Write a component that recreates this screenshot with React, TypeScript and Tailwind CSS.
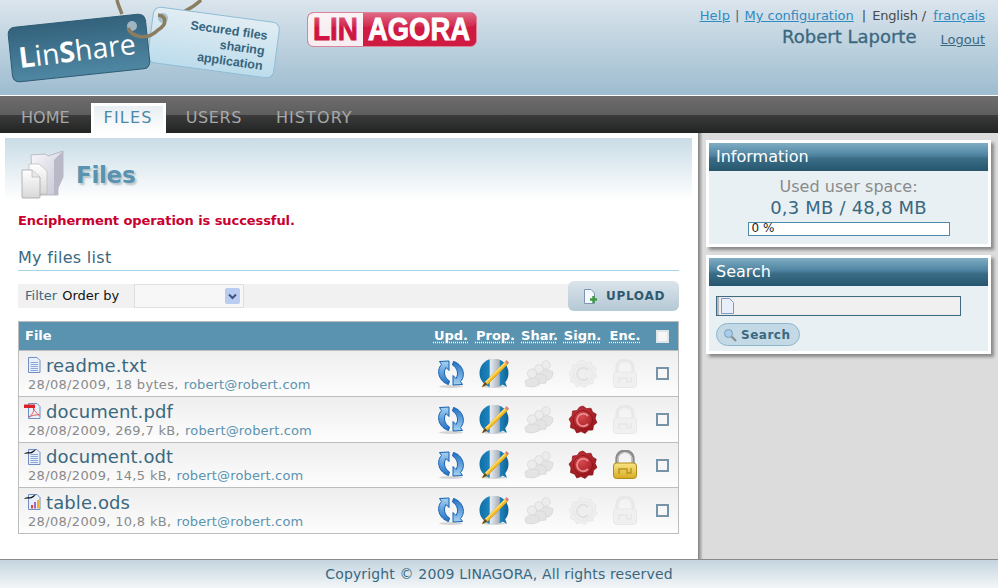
import React from 'react';

const files = [
  { name: 'readme.txt', meta: '28/08/2009, 18 bytes,', mail: 'robert@robert.com', icon: 'txt', signed: false, locked: false, row: 'h-[46px]' },
  { name: 'document.pdf', meta: '28/08/2009, 269,7 kB,', mail: 'robert@robert.com', icon: 'pdf', signed: true, locked: false, row: 'h-[46px]' },
  { name: 'document.odt', meta: '28/08/2009, 14,5 kB,', mail: 'robert@robert.com', icon: 'odt', signed: true, locked: true, row: 'h-[45px]' },
  { name: 'table.ods', meta: '28/08/2009, 10,8 kB,', mail: 'robert@robert.com', icon: 'ods', signed: false, locked: false, row: 'h-[46px]' },
];

const gridCols = 'grid grid-cols-[411px_42px_43px_47px_41px_44px_31px] items-center';

function Defs() {
  return (
    <svg className="absolute h-0 w-0">
      <defs>
        <linearGradient id="tagDark" x1="0" y1="0" x2="0" y2="1">
          <stop offset="0" stopColor="#33627c" />
          <stop offset="1" stopColor="#4f87a3" />
        </linearGradient>
        <linearGradient id="tagLight" x1="0" y1="0" x2="0" y2="1">
          <stop offset="0" stopColor="#e2edf3" />
          <stop offset="1" stopColor="#bcdcec" />
        </linearGradient>
        <linearGradient id="blueArrow" x1="0" y1="0" x2="0" y2="1">
          <stop offset="0" stopColor="#a5d2f2" />
          <stop offset="1" stopColor="#1f6fc4" />
        </linearGradient>
        <linearGradient id="globe" x1="0" y1="0" x2="1" y2="0">
          <stop offset="0" stopColor="#0f6fa8" />
          <stop offset="0.33" stopColor="#1e83bd" />
          <stop offset="0.38" stopColor="#e4eaf0" />
          <stop offset="0.68" stopColor="#a9b0b8" />
          <stop offset="0.72" stopColor="#1e83bd" />
          <stop offset="1" stopColor="#0d5f92" />
        </linearGradient>
        <radialGradient id="seal" cx="0.45" cy="0.4" r="0.65">
          <stop offset="0" stopColor="#d8474c" />
          <stop offset="1" stopColor="#8e0f16" />
        </radialGradient>
        <linearGradient id="gold" x1="0" y1="0" x2="0" y2="1">
          <stop offset="0" stopColor="#f8e585" />
          <stop offset="1" stopColor="#d8ab22" />
        </linearGradient>
        <linearGradient id="folder" x1="0" y1="0" x2="1" y2="1">
          <stop offset="0" stopColor="#f8f8fc" />
          <stop offset="1" stopColor="#c4c4d2" />
        </linearGradient>
        <linearGradient id="sheet" x1="0" y1="0" x2="0" y2="1">
          <stop offset="0" stopColor="#ffffff" />
          <stop offset="1" stopColor="#d8d8d8" />
        </linearGradient>
        <linearGradient id="gloss" x1="0" y1="0" x2="0" y2="1">
          <stop offset="0" stopColor="#ffffff" stopOpacity="0.35" />
          <stop offset="1" stopColor="#ffffff" stopOpacity="0.05" />
        </linearGradient>
      </defs>
    </svg>
  );
}

function LinShareLogo() {
  return (
    <svg width="282" height="95" viewBox="0 0 282 95" className="shrink-0">
      <path d="M117 0 C118 5 120 9 122 14 M201 0 C197 4 191 8 185 11" fill="none" stroke="#8b7d60" strokeWidth="3.4" />
      <g transform="rotate(7.6 213 42.5)">
        <rect x="150" y="14.5" width="127" height="56" rx="7" fill="url(#tagLight)" stroke="#8fbdd6" />
      </g>
      <circle cx="163" cy="18" r="5" fill="#a9bfcc" />
      <g transform="rotate(-6 79 48)">
        <rect x="10" y="20.5" width="138" height="55" rx="7" fill="url(#tagDark)" stroke="#2f5c74" />
      </g>
      <circle cx="132" cy="26" r="5" fill="#9fb5c2" />
      <path d="M128 28 C131 36 146 42 158 30 C168 24 166 16 158 15" fill="none" stroke="#8b7d60" strokeWidth="3.6" />
      <text transform="translate(20 68) rotate(-7)" fill="#fff" fontFamily="'Open Sans', sans-serif" fontSize="28.5">
        <tspan fontWeight="700">L</tspan>in<tspan fontWeight="700">S</tspan>hare
      </text>
      <g fill="#37657e" fontFamily="'Liberation Sans', sans-serif" fontSize="12.5" fontWeight="700" textAnchor="end">
        <text transform="translate(267 40) rotate(8)">Secured files</text>
        <text transform="translate(264 55) rotate(8)">sharing</text>
        <text transform="translate(262 70) rotate(8)">application</text>
      </g>
    </svg>
  );
}

function LinagoraLogo() {
  return (
    <svg width="171" height="36" viewBox="0 0 171 36" className="shrink-0">
      <rect x="0.5" y="0.5" width="169" height="34" rx="6" fill="#cf1a42" stroke="#d9849a" />
      <path d="M1 6.5 a5.5 5.5 0 0 1 5.5 -5.5 H56 V34 H6.5 a5.5 5.5 0 0 1 -5.5 -5.5 Z" fill="#f8eef1" />
      <text transform="translate(6 28) scale(0.873 1)" fill="#cf1441" stroke="#cf1441" strokeWidth="0.9" fontFamily="'Liberation Sans', sans-serif" fontSize="32" fontWeight="700">LIN</text>
      <text transform="translate(61 28) scale(0.857 1)" fill="#fff" stroke="#fff" strokeWidth="0.9" fontFamily="'Liberation Sans', sans-serif" fontSize="32" fontWeight="700">AGORA</text>
      <rect x="1" y="1" width="168" height="14" rx="6" fill="url(#gloss)" />
    </svg>
  );
}

function FilesIcon() {
  return (
    <svg width="46" height="50" viewBox="0 0 46 50" className="shrink-0">
      <path d="M10 5 L25 4 L27 6 L42 1 L42 27 L37 38 L37 45 L12 45 Z" fill="url(#folder)" stroke="#a8a8b6" strokeWidth="0.7" />
      <path d="M42 1 L42 27 L37 38 L37 45 L33 45 L33 10 Z" fill="#b8b8c6" />
      <path d="M8 14 H18 L26 21 V44 H8 Z" fill="url(#sheet)" stroke="#b9b9b9" strokeWidth="0.7" />
      <path d="M1 20 H11 L19 27 V47 Q19 48 18 48 H2 Q1 48 1 47 Z" fill="url(#sheet)" stroke="#a5a5a5" strokeWidth="0.8" />
      <path d="M11 20 V27 H19" fill="#e8e8e8" stroke="#b5b5b5" strokeWidth="0.7" />
    </svg>
  );
}

function RefreshIcon() {
  const arrow = 'M12 25.5 C3 23 -1 12 5 5.5 L3 2.5 L12.5 2 L12.5 11.5 L9.5 8.5 C6.5 13 8 19 13 22 Z';
  return (
    <svg width="30" height="30" viewBox="0 0 30 30">
      <ellipse cx="15" cy="27.5" rx="12" ry="1.5" fill="#000" opacity="0.15" />
      <g transform="translate(0.5 0)">
        <path d={arrow} fill="url(#blueArrow)" stroke="#1660b0" strokeWidth="1" />
        <path d={arrow} fill="url(#blueArrow)" stroke="#1660b0" strokeWidth="1" transform="rotate(180 14.5 14)" />
      </g>
    </svg>
  );
}

function PropIcon() {
  return (
    <svg width="32" height="30" viewBox="0 0 32 30">
      <ellipse cx="16" cy="27.5" rx="12" ry="1.5" fill="#000" opacity="0.15" />
      <path d="M22 24 L29 28 L26 20 Z" fill="#1875ab" />
      <circle cx="16" cy="14" r="14.5" fill="url(#globe)" />
      <path d="M4 28 L7 23 L27 3 L29.5 5.5 L9.5 25.5 Z" fill="#f5b81f" stroke="#c98b12" strokeWidth="0.5" />
      <path d="M7 23 L27 3 L28 4 L8 24 Z" fill="#fde27a" />
      <path d="M27 3 L28.5 1 L31 3.5 L29.5 5.5 Z" fill="#d9817a" />
      <path d="M4 28 L7 23 L9.5 25.5 Z" fill="#5a4a2a" />
    </svg>
  );
}

function ShareIcon() {
  return (
    <svg width="30" height="30" viewBox="0 0 30 30">
      <g fill="#e4e4e4" stroke="#d0d0d0" strokeWidth="0.6">
        <path d="M15 14 Q22 8 29 13 Q29 19 25 21 L18 21 Z" />
        <circle cx="22" cy="6" r="4.2" fill="#ececec" />
        <path d="M8 18 Q15 12 22 17 L22 24 L12 25 Z" />
        <circle cx="15" cy="10" r="4.4" fill="#ececec" />
        <path d="M1 22 Q8 16 15 21 L15 26 Q8 29.5 2 27 Z" />
        <circle cx="8" cy="14.5" r="4.6" fill="#ececec" />
      </g>
    </svg>
  );
}

function SealIcon({ on }: { on: boolean }) {
  const fill = on ? 'url(#seal)' : '#eeeeee';
  const stroke = on ? '#8a0f16' : '#e2e2e2';
  const mark = on ? '#e88a8c' : '#e0e0e0';
  return (
    <svg width="30" height="30" viewBox="0 0 30 30">
      <path
        d="M15 1 L18.5 3.6 L23 3.2 L24.6 7 L28.3 9.2 L27.2 13.6 L29 17.6 L25.6 20.4 L24.8 25 L20.4 25.2 L17 28.4 L13 26.6 L8.8 28 L6.6 24.2 L2.4 22.6 L3 18 L1 14 L4 10.6 L4.6 6 L9 5.4 L11.6 2 Z"
        fill={fill}
        stroke={stroke}
        strokeWidth="0.6"
        strokeLinejoin="round"
      />
      <circle cx="15" cy="15" r="9.5" fill="none" stroke={on ? '#7d0b12' : '#e4e4e4'} strokeWidth="0.7" />
      <path d="M19.5 10.5 A6.2 6.2 0 1 0 19.5 19.5" fill="none" stroke={mark} strokeWidth="2" strokeLinecap="round" />
    </svg>
  );
}

function LockIcon({ on }: { on: boolean }) {
  if (on) {
    return (
      <svg width="26" height="30" viewBox="0 0 26 30">
        <path d="M5 14 V9 C5 -1.5 21 -1.5 21 9 V14" fill="none" stroke="#8d8d8d" strokeWidth="3.4" />
        <path d="M6 13 V9 C6 0.5 20 0.5 20 9 V13" fill="none" stroke="#dcdcdc" strokeWidth="1" />
        <rect x="1.5" y="13" width="23" height="15.5" rx="3" fill="url(#gold)" stroke="#b08a1a" />
        <path d="M7 24 V19 H15 V23 H19 V18" fill="none" stroke="#b5921f" strokeWidth="1.4" />
      </svg>
    );
  }
  return (
    <svg width="26" height="30" viewBox="0 0 26 30">
      <path d="M5 14 V9 C5 -1.5 21 -1.5 21 9 V14" fill="none" stroke="#e8e8e8" strokeWidth="3.4" />
      <rect x="1.5" y="13" width="23" height="15.5" rx="3" fill="#f0f0f0" stroke="#e8e8e8" />
      <path d="M7 24 V19 H15 V23 H19 V18" fill="none" stroke="#e6e6e6" strokeWidth="1.4" />
    </svg>
  );
}

function PageIcon({ kind }: { kind: string }) {
  return (
    <svg width="17" height="17" viewBox="0 0 17 17" className="shrink-0">
      <path d="M4.5 0.5 H13 L16 3.5 V15.5 H4.5 Z" fill="#eaf0fb" stroke="#6f8fc2" />
      {(kind === 'txt' || kind === 'odt') && (
        <path d="M6.5 5.5 H14 M6.5 7.5 H14 M6.5 9.5 H14 M6.5 11.5 H14 M6.5 13.5 H14" stroke="#8aa8d8" />
      )}
      {kind === 'pdf' && (
        <>
          <path d="M5 14 C9 11 10 8 9.5 5 C11 9 13 11 15.5 12 C11.5 11.5 8 12.5 5 14 Z" fill="none" stroke="#e03a3a" strokeWidth="0.8" />
          <rect x="0" y="1.5" width="11" height="3.5" fill="#d8232a" />
        </>
      )}
      {kind === 'ods' && (
        <>
          <rect x="7" y="11" width="2" height="3.5" fill="#e0492f" />
          <rect x="10" y="8" width="2" height="6.5" fill="#a468c8" />
          <rect x="13" y="6" width="2" height="8.5" fill="#f0b429" />
        </>
      )}
      {(kind === 'odt' || kind === 'ods') && (
        <path d="M0 5 C3 2 5 4 7 3 C9 2 10 1 12 0.5 C10 3 8 4.5 6 4.5 C4 4.5 2 4 0 5 Z" fill="#111" />
      )}
    </svg>
  );
}

function Check({ light }: { light?: boolean }) {
  return (
    <span
      className={
        'block h-[13px] w-[13px] border-2 ' +
        (light ? 'border-[#dfe6ea] bg-[#f6f6f6]' : 'border-[#7793a8] bg-[#f7f7f7]')
      }
    />
  );
}

function SideBox({ title, children }: { title: string; children: React.ReactNode }) {
  return (
    <section className="w-[285px] border-[3px] border-white bg-[#e8f0f4] shadow-[3px_3px_3px_#8a8a8a]">
      <h2 className="flex h-[28px] items-center bg-[linear-gradient(#7fadc4,#4d83a0_45%,#3b6d87_55%,#26566d)] pl-[7px] text-[16px] leading-none font-normal text-white">
        {title}
      </h2>
      {children}
    </section>
  );
}

function FileRow({ file }: { file: (typeof files)[number] }) {
  return (
    <div className={gridCols + ' ' + file.row + ' border-b border-[#bdbdbd] bg-[linear-gradient(#eeeeee,#fdfdfd)]'}>
      <div className="flex flex-col">
        <div className="flex items-center gap-[5px] pl-[5px] text-[18px] leading-[22px] tracking-[0.1px] text-[#3a6880]">
          <PageIcon kind={file.icon} />
          <span>{file.name}</span>
        </div>
        <div className="pl-[9px] text-[13px] leading-[16px] tracking-[0.33px] whitespace-nowrap text-[#8a8a8a]">
          {file.meta}
          <span className="ml-[5px] tracking-[0.15px] text-[#5a93b0]">{file.mail}</span>
        </div>
      </div>
      <span className="flex justify-center"><RefreshIcon /></span>
      <span className="flex justify-center"><PropIcon /></span>
      <span className="flex justify-center"><ShareIcon /></span>
      <span className="flex justify-center"><SealIcon on={file.signed} /></span>
      <span className="flex justify-center"><LockIcon on={file.locked} /></span>
      <span className="flex justify-center"><Check /></span>
    </div>
  );
}

export default function App() {
  return (
    <div className="flex h-[588px] w-[998px] flex-col overflow-hidden bg-white font-['DejaVu_Sans',sans-serif]">
      <Defs />
      <header className="flex h-[95px] shrink-0 bg-[linear-gradient(#dbe5ed,#9dbccf)]">
        <LinShareLogo />
        <div className="mt-3 ml-[25px]">
          <LinagoraLogo />
        </div>
        <div className="ml-auto flex flex-col items-end pt-[8px] pr-[13px]">
          <p className="text-[13px] leading-[16px] text-[#4a4a4a]">
            <a className="tracking-[0.2px] text-[#2f8bc0] underline">Help</a>
            <span className="mx-[5px] text-[#3a6880]">|</span>
            <a className="text-[#2f8bc0] underline">My configuration</a>
            <span className="mr-[6px] ml-[8px]">|</span>
            <span className="tracking-[-0.2px]">English</span> <span className="mr-[3px]">/</span> <a className="text-[#2f8bc0] underline">français</a>
          </p>
          <div className="mt-[1px] flex items-baseline gap-6">
            <span className="text-[18px] leading-[24px] font-medium text-[#3a6880] [-webkit-text-stroke:0.3px_#3a6880]">Robert Laporte</span>
            <a className="relative top-px text-[13px] text-[#3a6880] underline">Logout</a>
          </div>
        </div>
      </header>

      <nav className="mt-px flex h-[37px] shrink-0 items-end bg-[linear-gradient(#6f6d6d,#5e5e5e_50%,#3c3c3c_50%,#222323)] pl-[4px] text-[16px] text-[#a8a8a8]">
        <a className="flex h-[30px] items-center pr-[21px] pl-[17px]">HOME</a>
        <a className="flex h-[30px] items-center border-[3px] border-b-0 border-white bg-[linear-gradient(#e8eef2,#ffffff)] px-[10px] pb-[3px] tracking-[1.2px] text-[#4a88a8]">FILES</a>
        <a className="flex h-[30px] items-center px-[20px] tracking-[0.6px]">USERS</a>
        <a className="flex h-[30px] items-center px-[14px] tracking-[1.1px]">HISTORY</a>
      </nav>

      <div className="flex min-h-0 flex-1">
        <main className="w-[698px] shrink-0 pt-[5px] pl-[5px]">
          <div className="flex h-[62px] w-[687px] items-center bg-[linear-gradient(#c9dce6,#ffffff)] pt-[12px] pl-[16px]">
            <FilesIcon />
            <h1 className="ml-[9px] text-[23px] font-bold tracking-[-0.3px] text-[#5a93b0] [text-shadow:2px_2px_2px_#b5c3cb]">Files</h1>
          </div>
          <div className="box-content w-[661px] pl-[13px]">
            <p className="mt-[13px] text-[13px] leading-[16px] font-bold tracking-[-0.08px] text-[#c8002f]">Encipherment operation is successful.</p>
            <h2 className="mt-[17px] h-[25px] border-b border-[#a8d4ea] text-[16px] leading-[24px] font-normal tracking-[0.3px] text-[#3a6880]">My files list</h2>
            <div className="relative mt-[13px] flex h-[24px] items-center bg-[#f1f1f1] pl-[7px] text-[13px]">
              <span className="text-[#3a6880]">Filter</span>
              <span className="ml-[5px] text-[#111]">Order by</span>
              <span className="ml-[15px] flex h-[24px] w-[110px] items-center justify-end border border-[#dedede] bg-[#f7f7f7] pr-[3px]">
                <span className="flex h-[16px] w-[15px] items-center justify-center rounded-[2px] bg-[#b9ccf2]">
                  <svg width="9" height="7" viewBox="0 0 9 7"><path d="M1 1.5 L4.5 5 L8 1.5" fill="none" stroke="#3f5580" strokeWidth="2" /></svg>
                </span>
              </span>
              <button className="absolute top-[-3px] right-0 flex h-[30px] w-[111px] items-center rounded-[6px] bg-[linear-gradient(#dbe4ea,#b4c8d5)] pl-[15px] text-[12px] font-bold tracking-[0.7px] text-[#2f5a72]">
                <svg width="17" height="17" viewBox="0 0 17 17" className="mr-[6px]">
                  <path d="M1.5 1.5 H8 L11.5 5 V15.5 H1.5 Z" fill="#f5f8fc" stroke="#7d95b5" />
                  <path d="M10.5 8 V15 M7 11.5 H14" stroke="#3f9a45" strokeWidth="2.4" />
                </svg>
                UPLOAD
              </button>
            </div>
            <div className="mt-[13px] border-x border-t border-[#bdbdbd]">
              <div className={gridCols + ' h-[29px] border-b border-[#bdbdbd] bg-[#5a93b0] text-[13px] font-bold text-white'}>
                <span className="pl-[6px]">File</span>
                <abbr className="justify-self-center underline decoration-dotted underline-offset-2">Upd.</abbr>
                <abbr className="ml-1 justify-self-center underline decoration-dotted underline-offset-2">Prop.</abbr>
                <abbr className="ml-0.5 justify-self-center underline decoration-dotted underline-offset-2">Shar.</abbr>
                <abbr className="justify-self-center underline decoration-dotted underline-offset-2">Sign.</abbr>
                <abbr className="justify-self-center underline decoration-dotted underline-offset-2">Enc.</abbr>
                <span className="flex justify-center"><Check light /></span>
              </div>
              {files.map((f) => (
                <FileRow key={f.name} file={f} />
              ))}
            </div>
          </div>
        </main>

        <aside className="flex flex-1 flex-col gap-[8px] bg-[linear-gradient(90deg,#808080,#dcdcdc_5px)] pt-[7px] pl-[8px]">
          <SideBox title="Information">
            <div className="flex h-[73px] flex-col items-center pt-[7px]">
              <p className="text-[16px] leading-[18px] tracking-[0.05px] text-[#8a8a8a]">Used user space:</p>
              <p className="mt-[2px] text-[18px] leading-[20px] tracking-[0.2px] text-[#3a6880]">0,3 MB / 48,8 MB</p>
              <div className="mt-[4px] h-[14px] w-[202px] border border-[#4f8aa8] bg-white pl-[3px] text-[12px] leading-[11px] text-[#222]">0 %</div>
            </div>
          </SideBox>
          <SideBox title="Search">
            <div className="h-[65px] pt-[10px] pl-[7px]">
              <div className="flex h-[20px] w-[245px] items-center border border-[#3f6a82] bg-[#f0f0f0] pl-[4px] shadow-[inset_2px_0_1px_#b5b5b5]">
                <svg width="13" height="16" viewBox="0 0 13 16">
                  <path d="M0.5 0.5 H8.5 L12.5 4.5 V15.5 H0.5 Z" fill="#e8effb" stroke="#7f98c6" />
                </svg>
              </div>
              <button className="mt-[7px] flex h-[23px] w-[84px] items-center gap-[4px] rounded-full border border-[#8fb5cc] bg-[#c3d9e5] pl-[6px] text-[12px] font-bold tracking-[0.5px] text-[#3a6880]">
                <svg width="14" height="14" viewBox="0 0 14 14">
                  <circle cx="5.5" cy="5.5" r="4" fill="#a9cdea" stroke="#7d9cb8" />
                  <path d="M8.5 8.5 L13 13" stroke="#8a8a8a" strokeWidth="2" />
                </svg>
                Search
              </button>
            </div>
          </SideBox>
        </aside>
      </div>

      <footer className="flex h-[29px] shrink-0 items-center justify-center border-t border-[#8a8a8a] bg-[linear-gradient(#c4d4df,#f3f6f8)] text-[14px] tracking-[0.15px] text-[#3a6880]">
        Copyright © 2009 LINAGORA, All rights reserved
      </footer>
    </div>
  );
}
